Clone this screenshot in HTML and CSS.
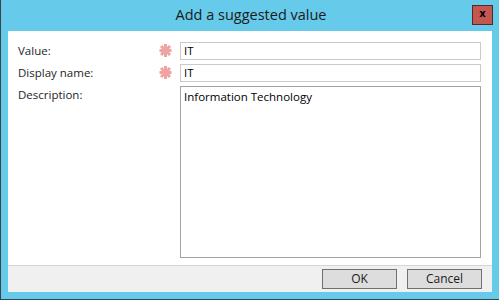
FILE: index.html
```html
<!DOCTYPE html>
<html>
<head>
<meta charset="utf-8">
<link rel="stylesheet" href="styles.css">
</head>
<body>
<div class="window">
  <div class="titlebar">
    <div class="title">Add a suggested value</div>
    <div class="close">x</div>
  </div>
  <div class="client">
    <div class="form">
      <div class="label">Value:</div>
      <div class="req"><svg width="15" height="15" viewBox="0 0 15 15"><g stroke="#f0a3a3" stroke-width="3" stroke-linecap="butt"><line x1="7.5" y1="1" x2="7.5" y2="14"/><line x1="1.5" y1="7.5" x2="13.5" y2="7.5"/><line x1="3" y1="3" x2="12" y2="12"/><line x1="12" y1="3" x2="3" y2="12"/></g></svg></div>
      <div class="input">IT</div>
      <div class="label">Display name:</div>
      <div class="req"><svg width="15" height="15" viewBox="0 0 15 15"><g stroke="#f0a3a3" stroke-width="3" stroke-linecap="butt"><line x1="7.5" y1="1" x2="7.5" y2="14"/><line x1="1.5" y1="7.5" x2="13.5" y2="7.5"/><line x1="3" y1="3" x2="12" y2="12"/><line x1="12" y1="3" x2="3" y2="12"/></g></svg></div>
      <div class="input">IT</div>
      <div class="label">Description:</div>
      <div class="req"></div>
      <div class="textarea">Information Technology</div>
    </div>
    <div class="footer">
      <div class="btn">OK</div>
      <div class="btn">Cancel</div>
    </div>
  </div>
</div>
</body>
</html>
```

FILE: styles.css
```css
html, body {
  margin: 0;
  padding: 0;
}
body {
  width: 499px;
  height: 300px;
  overflow: hidden;
  font-family: "Open Sans", "Noto Sans", sans-serif;
  font-size: 11.5px;
  color: #1e1e1e;
}
.window {
  box-sizing: border-box;
  width: 499px;
  height: 300px;
  background: #66cbea;
  border-left: 1px solid #3a4448;
  border-bottom: 1px solid #3a4448;
  padding: 0 7px 7px 7px;
  display: flex;
  flex-direction: column;
}
.titlebar {
  height: 31px;
  flex: none;
  display: flex;
  align-items: flex-start;
  justify-content: center;
  position: relative;
}
.title {
  font-size: 14.5px;
  color: #1a1a1a;
  margin-top: 5px;
  margin-left: 2px;
}
.close {
  position: absolute;
  right: -1px;
  top: 5px;
  box-sizing: border-box;
  width: 21px;
  height: 20px;
  background: #c4574f;
  border: 1px solid #4e2c2a;
  color: #000;
  font-family: "DejaVu Sans", sans-serif;
  font-weight: bold;
  font-size: 10px;
  line-height: 16px;
  text-align: center;
}
.client {
  flex: 1;
  background: #fff;
  display: flex;
  flex-direction: column;
}
.form {
  flex: 1;
  display: grid;
  grid-template-columns: 140px 22px 1fr;
  grid-template-rows: 18px 18px 1fr;
  row-gap: 4px;
  padding: 11px 11px 7px 10px;
}
.label {
  line-height: 16px;
  margin-top: 1px;
}
.req {
  padding-top: 1px;
}
.req svg {
  display: block;
}
.input {
  box-sizing: border-box;
  border: 1px solid #cacaca;
  padding: 0 3px;
  line-height: 16px;
  font-size: 11.5px;
  color: #000;
}
.textarea {
  box-sizing: border-box;
  border: 1px solid #a3a3a3;
  padding: 1px 3px;
  line-height: 17px;
  font-size: 11.5px;
  color: #000;
}
.footer {
  flex: none;
  height: 23px;
  background: #f0f0f0;
  border-top: 1px solid #d6d6d6;
  display: flex;
  justify-content: flex-end;
  align-items: flex-start;
  gap: 10px;
  padding: 3px 10px 0 0;
  box-sizing: content-box;
}
.btn {
  box-sizing: border-box;
  width: 75px;
  height: 20px;
  background: #dddddd;
  border: 1px solid #707070;
  text-align: center;
  line-height: 18px;
  font-size: 12px;
  color: #1a1a1a;
}
```
